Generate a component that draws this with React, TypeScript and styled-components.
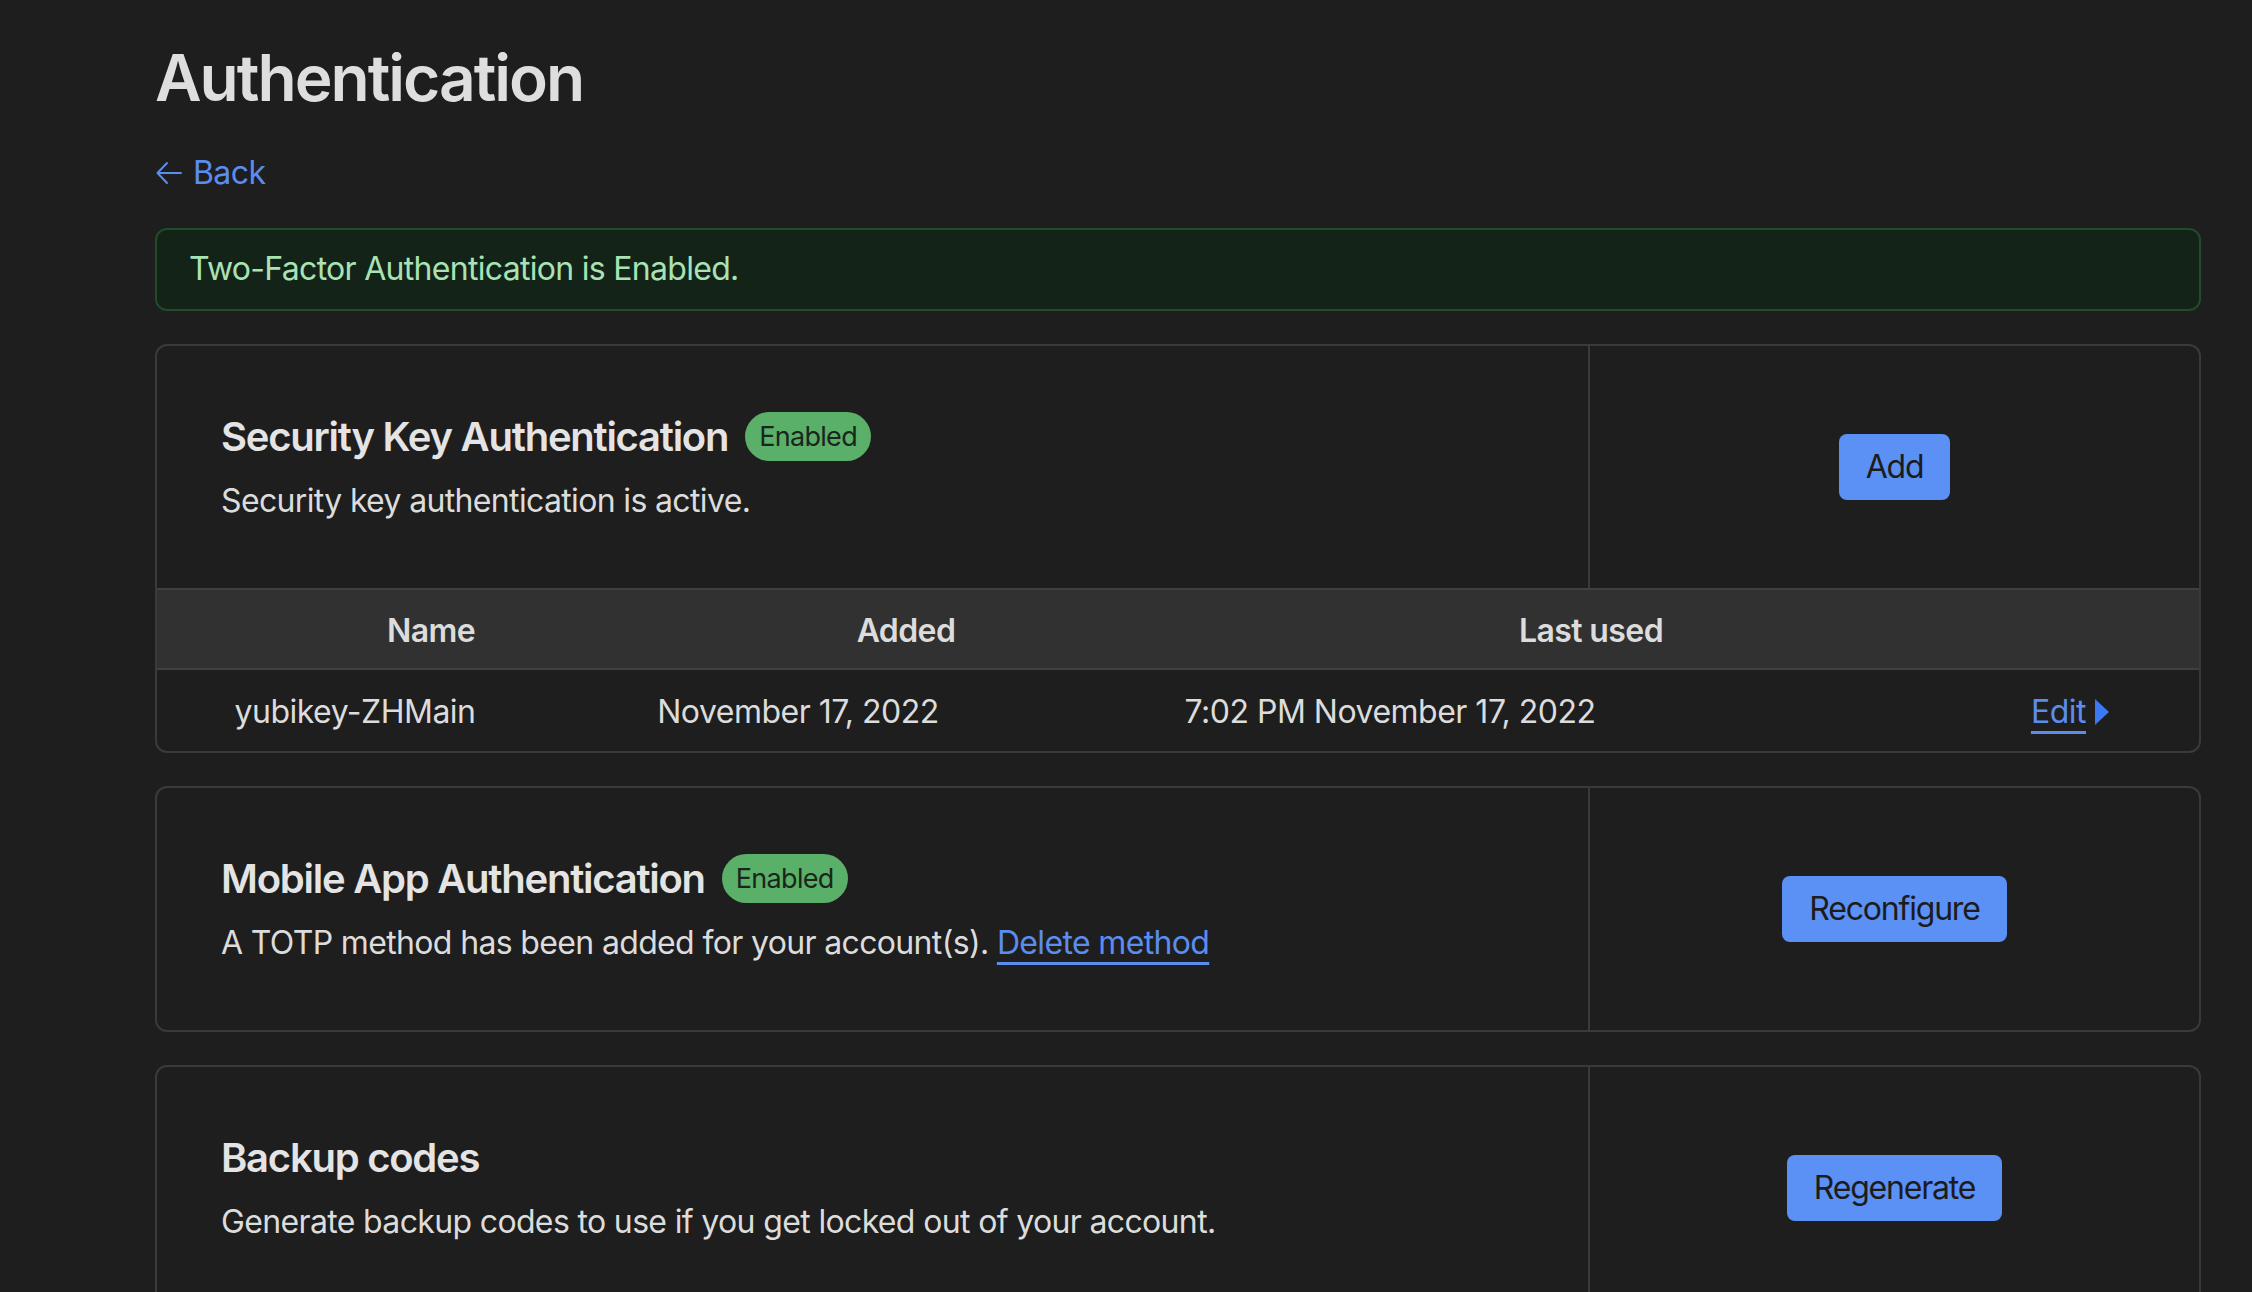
import React from "react";
import styled, { createGlobalStyle } from "styled-components";

const GlobalStyle = createGlobalStyle`
  html, body {
    margin: 0;
    padding: 0;
    background: #1e1e1e;
  }
  body {
    font-family: "Inter", "Noto Sans", sans-serif;
    color: #dcdcdc;
    -webkit-font-smoothing: antialiased;
  }
`;

type Key = { name: string; added: string; lastUsed: string };

const keys: Key[] = [
  { name: "yubikey-ZHMain", added: "November 17, 2022", lastUsed: "7:02 PM November 17, 2022" },
];

const BackArrow = () => (
  <svg width="28" height="26" viewBox="0 0 28 26" fill="none">
    <path d="M12 3 L2.5 13 L12 23 M2.5 13 H26" stroke="#5b8def" strokeWidth="2" strokeLinecap="round" strokeLinejoin="round" />
  </svg>
);

const Caret = () => (
  <svg width="16" height="28" viewBox="0 0 16 28">
    <polygon points="1,1 15,14 1,27" fill="#3b78f5" />
  </svg>
);

const App: React.FC = () => {
  return (
    <>
      <GlobalStyle />
      <Page>
        <Title>Authentication</Title>
        <BackLink href="#">
          <BackArrow />
          <span>Back</span>
        </BackLink>

        <Banner>Two-Factor Authentication is Enabled.</Banner>

        <Card>
          <CardTop>
            <CardInfo>
              <HeadingRow>
                <CardHeading>Security Key Authentication</CardHeading>
                <Badge>Enabled</Badge>
              </HeadingRow>
              <Description>Security key authentication is active.</Description>
            </CardInfo>
            <CardAction>
              <Button>Add</Button>
            </CardAction>
          </CardTop>
          <TableHead>
            <HeadCell>Name</HeadCell>
            <HeadCell>Added</HeadCell>
            <HeadCell>Last used</HeadCell>
            <HeadCell />
          </TableHead>
          {keys.map((k) => (
            <TableRow key={k.name}>
              <Cell>{k.name}</Cell>
              <Cell>{k.added}</Cell>
              <Cell>{k.lastUsed}</Cell>
              <EditCell>
                <EditLink href="#">Edit</EditLink>
                <Caret />
              </EditCell>
            </TableRow>
          ))}
        </Card>

        <Card>
          <CardTop>
            <CardInfo>
              <HeadingRow>
                <CardHeading>Mobile App Authentication</CardHeading>
                <Badge>Enabled</Badge>
              </HeadingRow>
              <Description>
                A TOTP method has been added for your account(s). <TextLink href="#">Delete method</TextLink>
              </Description>
            </CardInfo>
            <CardAction>
              <Button>Reconfigure</Button>
            </CardAction>
          </CardTop>
        </Card>

        <Card>
          <CardTop>
            <CardInfo>
              <HeadingRow>
                <CardHeading>Backup codes</CardHeading>
              </HeadingRow>
              <Description>Generate backup codes to use if you get locked out of your account.</Description>
            </CardInfo>
            <CardAction>
              <Button>Regenerate</Button>
            </CardAction>
          </CardTop>
        </Card>
      </Page>
    </>
  );
};

const Page = styled.main`
  padding: 40px 51px 40px 155px;
  display: flex;
  flex-direction: column;
`;

const Title = styled.h1`
  margin: 0;
  font-size: 64px;
  line-height: 1.2;
  font-weight: 600;
  color: #dedede;
  letter-spacing: -2px;
`;

const BackLink = styled.a`
  margin-top: 37px;
  display: inline-flex;
  align-self: flex-start;
  align-items: center;
  gap: 10px;
  font-size: 32px;
  line-height: 1.2;
  color: #5b8def;
  text-decoration: none;
  letter-spacing: -0.6px;
`;

const Banner = styled.div`
  margin-top: 36px;
  padding: 20px 32px;
  border: 2px solid #234a2a;
  border-radius: 12px;
  background: #132318;
  color: #a9e2b4;
  font-size: 32px;
  line-height: 1.2;
  letter-spacing: -0.7px;
`;

const Card = styled.section`
  margin-top: 33px;
  border: 2px solid #3a3a3a;
  border-radius: 12px;
  overflow: hidden;
`;

const CardTop = styled.div`
  display: grid;
  grid-template-columns: 1fr 609px;
  height: 242px;
`;

const CardInfo = styled.div`
  display: flex;
  flex-direction: column;
  justify-content: center;
  padding-left: 64px;
  border-right: 2px solid #3a3a3a;
`;

const HeadingRow = styled.div`
  display: flex;
  align-items: center;
  gap: 17px;
  min-height: 49px;
`;

const CardHeading = styled.h2`
  margin: 0;
  font-size: 40px;
  line-height: 1.2;
  font-weight: 600;
  color: #e4e4e4;
  letter-spacing: -1.25px;
`;

const Badge = styled.span`
  display: inline-flex;
  align-items: center;
  height: 49px;
  padding: 0 14px;
  border-radius: 25px;
  background: #5aaf69;
  color: #1a261c;
  font-size: 27px;
  letter-spacing: -0.7px;
`;

const Description = styled.p`
  margin: 21px 0 0;
  font-size: 32px;
  line-height: 1.2;
  color: #dcdcdc;
  letter-spacing: -0.65px;
`;

const TextLink = styled.a`
  color: #5b8def;
  text-decoration: underline;
  text-decoration-thickness: 3px;
  text-underline-offset: 8px;
`;

const CardAction = styled.div`
  display: flex;
  align-items: center;
  justify-content: center;
`;

const Button = styled.button`
  padding: 14px 27px;
  border: none;
  border-radius: 8px;
  background: #5b90f5;
  color: #1c1c1c;
  font-family: inherit;
  font-size: 32px;
  line-height: 38px;
  letter-spacing: -1.2px;
  cursor: pointer;
`;

const TableHead = styled.div`
  display: grid;
  grid-template-columns: 548px 402px 968px 1fr;
  align-items: center;
  height: 82px;
  padding-top: 3px;
  box-sizing: border-box;
  background: #313131;
  border-top: 2px solid #404040;
  border-bottom: 2px solid #404040;
`;

const HeadCell = styled.div`
  text-align: center;
  font-size: 32px;
  font-weight: 600;
  color: #dcdcdc;
  letter-spacing: -0.6px;
`;

const TableRow = styled.div`
  display: grid;
  grid-template-columns: 396px 490px 694px 1fr;
  align-items: center;
  height: 81px;
  padding-top: 3px;
  box-sizing: border-box;
`;

const Cell = styled.div`
  text-align: center;
  font-size: 32px;
  color: #dcdcdc;
  letter-spacing: -0.5px;
`;

const EditCell = styled.div`
  display: flex;
  align-items: center;
  justify-content: flex-end;
  gap: 8px;
  padding-right: 89px;
`;

const EditLink = styled.a`
  font-size: 32px;
  color: #5b8def;
  text-decoration: underline;
  text-decoration-thickness: 3px;
  text-underline-offset: 8px;
  letter-spacing: -0.5px;
`;

export default App;
